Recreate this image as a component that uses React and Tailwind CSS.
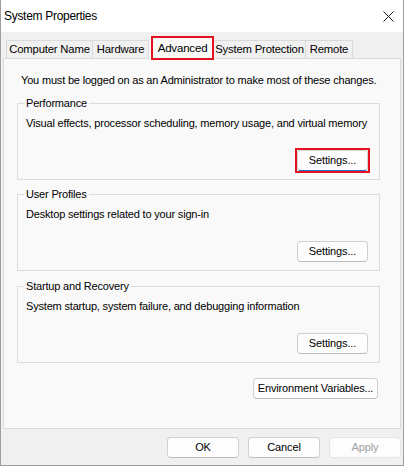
import React from 'react';

const font = { fontFamily: '"Liberation Sans", Arial, sans-serif' };

function WinButton({ children, className = '', disabled = false, focused = false }) {
  return (
    <button
      className={
        'h-[21px] rounded-[4px] border text-[11px] tracking-[-0.15px] leading-none whitespace-nowrap bg-[#fdfdfd] ' +
        (disabled
          ? 'border-[#e5e5e5] text-[#a0a0a0] bg-[#fbfbfb] '
          : focused
          ? 'border-[#d4d4d4] border-b-[#1f6fd0] text-black '
          : 'border-[#d0d0d0] border-b-[#bdbdbd] text-black ') +
        className
      }
    >
      {children}
    </button>
  );
}

function GroupBox({ title, text, highlight = false, className = '' }) {
  return (
    <div className={'flex flex-col border border-[#dcdcdc] w-[363px] ' + className}>
      <span className="-mt-[9px] ml-[6px] self-start px-[2px] bg-[#f9f9f9] h-[16px] leading-[16px]">
        {title}
      </span>
      <p className="mt-[4px] pl-[8px] h-[16px] leading-[16px]">{text}</p>
      <div className="flex justify-end mt-[19px] pr-[11px] pb-[8px]">
        {highlight ? (
          <div className="border-2 border-[#e4121f] -my-[2px] -mr-[2px]">
            <WinButton focused className="w-[71px] block">Settings...</WinButton>
          </div>
        ) : (
          <WinButton className="w-[71px]">Settings...</WinButton>
        )}
      </div>
    </div>
  );
}

export default function App() {
  const tabs = [
    { label: 'Computer Name', w: 'w-[87px]' },
    { label: 'Hardware', w: 'w-[57px]' },
    { label: 'Advanced', w: 'w-[65px]', active: true },
    { label: 'System Protection', w: 'w-[93px]' },
    { label: 'Remote', w: 'w-[48px]' },
  ];

  return (
    <div
      style={font}
      className="w-[404px] h-[466px] flex flex-col bg-[#f0f0f0] border-x border-b border-[#9e9e9e] text-[11px] tracking-[-0.18px] text-black whitespace-nowrap overflow-hidden"
    >
      {/* Title bar */}
      <div className="h-[32px] bg-white flex items-center justify-between shrink-0">
        <span className="pl-[3px] text-[12px] tracking-[-0.3px]">System Properties</span>
        <svg className="mr-[9px]" width="11" height="11" viewBox="0 0 11 11">
          <path d="M0.5 0.5L10.5 10.5M10.5 0.5L0.5 10.5" stroke="#1a1a1a" strokeWidth="1" />
        </svg>
      </div>

      <div className="flex flex-col px-[2px]">
        {/* Tabs */}
        <div className="flex items-end h-[26px] pl-[3px] relative z-10">
          {tabs.map((t) =>
            t.active ? (
              <div
                key={t.label}
                className={t.w + ' relative h-[22px] -mb-px bg-[#f9f9f9] flex items-start justify-center pt-[3px]'}
              >
                <span className="pl-[2px] text-[11.5px]">{t.label}</span>
                <span className="absolute left-[2px] right-0 -top-px -bottom-px border-2 border-[#e4121f]" />
              </div>
            ) : (
              <div
                key={t.label}
                className={t.w + ' h-[18px] border border-b-0 border-[#dadada] bg-[#f0f0f0] flex items-center justify-center -ml-px first:ml-0 text-[11.3px]'}
              >
                {t.label}
              </div>
            )
          )}
        </div>

        {/* Panel */}
        <div className="h-[371px] border border-[#dadada] bg-[#f9f9f9] flex flex-col px-[13px] pt-[13px]">
          <p className="pl-[4px] leading-[16px]">
            You must be logged on as an Administrator to make most of these changes.
          </p>
          <GroupBox
            className="mt-[15px]"
            title="Performance"
            text="Visual effects, processor scheduling, memory usage, and virtual memory"
            highlight
          />
          <GroupBox className="mt-[14px]" title="User Profiles" text="Desktop settings related to your sign-in" />
          <GroupBox
            className="mt-[15px]"
            title="Startup and Recovery"
            text="System startup, system failure, and debugging information"
          />
          <div className="flex justify-end w-[363px] pr-[2px] mt-[15px]">
            <WinButton className="w-[125px]">Environment Variables...</WinButton>
          </div>
        </div>

        {/* Bottom buttons */}
        <div className="flex justify-end gap-[9px] mt-[8px]">
          <WinButton className="w-[72px]">OK</WinButton>
          <WinButton className="w-[72px]">Cancel</WinButton>
          <WinButton className="w-[72px]" disabled>Apply</WinButton>
        </div>
      </div>
    </div>
  );
}
